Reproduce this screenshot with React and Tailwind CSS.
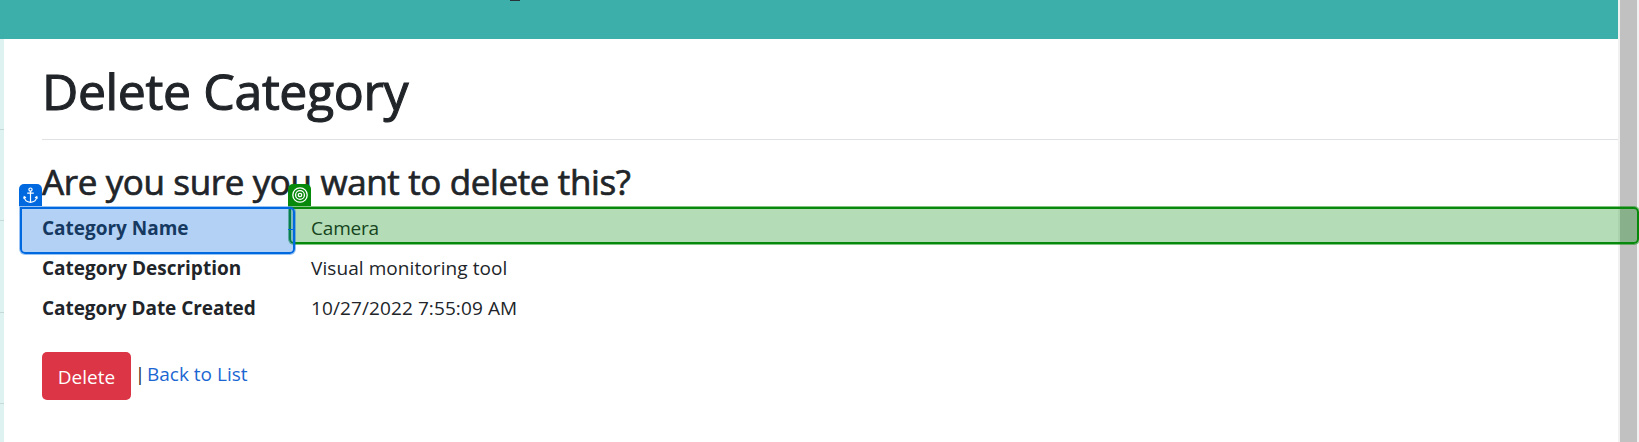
const rows = [
  { label: 'Category Name', value: 'Camera', ls: 'tracking-[-0.02px]', vs: 'tracking-[-0.2px]' },
  { label: 'Category Description', value: 'Visual monitoring tool', ls: 'tracking-[0px]', vs: 'tracking-[0.08px]' },
  { label: 'Category Date Created', value: '10/27/2022 7:55:09 AM', ls: 'tracking-[-0.05px]', vs: 'tracking-[0.1px]' },
];

function AnchorIcon() {
  return (
    <svg className="h-[17px] w-[15px]" viewBox="0 0 15 17" fill="none" stroke="white" strokeWidth="1.2">
      <circle cx="7.5" cy="2.6" r="1.6" />
      <path d="M7.5 4.2V15.4M4.2 6.2H10.8M1.2 9.8C1.6 13.2 4 15.2 7.5 15.3C11 15.2 13.4 13.2 13.8 9.8M.6 11.6L1.2 9.6L3 10.8M14.4 11.6L13.8 9.6L12 10.8" />
    </svg>
  );
}

function TargetIcon() {
  return (
    <svg className="h-4 w-4" viewBox="0 0 16 16" fill="none" stroke="white" strokeWidth="1.3">
      <circle cx="8" cy="8" r="7.2" />
      <circle cx="8" cy="8" r="4.4" />
      <circle cx="8" cy="8" r="1.7" />
    </svg>
  );
}

export default function App() {
  return (
    <div className="relative flex h-[442px] w-full overflow-hidden bg-white font-['Open_Sans','Noto_Sans',sans-serif] text-[#212529]">
      <div className="flex min-w-0 flex-1 flex-col">
        <header className="relative h-[39px] shrink-0 bg-[#3cafaa]">
          <div className="absolute left-[510px] top-0 h-px w-[10px] bg-[#26343a]" />
        </header>
        <div className="flex flex-1">
          <aside className="flex w-1 shrink-0 flex-col bg-[#def2f1]">
            <div className="h-[91px] border-b border-[#c3dad8]" />
            <div className="h-[91px] border-b border-[#c3dad8]" />
            <div className="h-[92px] border-b border-[#c3dad8]" />
            <div className="h-[91px] border-b border-[#c3dad8]" />
          </aside>
          <main className="flex-1 pl-[38px]">
            <h1 className="h-[100px] whitespace-nowrap pt-[20px] text-[50px] font-medium leading-[64px] tracking-[-0.37px] [-webkit-text-stroke:1.1px_#212529]">Delete Category</h1>
            <hr className="border-t border-[#e0e1e2]" />
            <h3 className="mt-[20px] h-[46px] whitespace-nowrap text-[35px] font-medium leading-[44px] tracking-[-0.37px] [-webkit-text-stroke:0.7px_#212529]">Are you sure you want to delete this?</h3>
            <dl className="mt-[2px]">
              {rows.map((r) => (
                <div key={r.label} className="flex h-10 items-center whitespace-nowrap text-[19px] leading-[30px]">
                  <dt className={`w-[269px] font-bold ${r.ls}`}>{r.label}</dt>
                  <dd className={r.vs}>{r.value}</dd>
                </div>
              ))}
            </dl>
            <div className="mt-[24px] flex h-12 whitespace-nowrap text-[19px]">
              <button className="h-12 w-[89px] rounded-[5px] bg-[#dc3545] pt-[2px] text-white">Delete</button>
              <span className="ml-[2px] w-[14px] text-center leading-[44px]">|</span>
              <a className="leading-[45px] text-[#1b66d2]">Back to List</a>
            </div>
          </main>
        </div>
      </div>
      <div className="flex w-[21px] shrink-0 bg-[#f1f1f1] pl-[2px] pr-[2px]">
        <div className="flex-1 bg-[#c1c1c1]" />
      </div>

      <div className="absolute left-[288px] top-[184px] flex h-[22px] w-[23px] justify-center rounded-t-[5px] bg-[#078a0c] pt-[3px]">
        <TargetIcon />
      </div>
      <div className="absolute left-[289px] top-[207px] h-[37px] w-[1350px] rounded-b-[5px] rounded-tr-[5px] border-2 border-[#078a0c] bg-[#078a0c]/30 shadow-[0_0_0_1px_rgba(7,138,12,0.5)]" />
      <div className="absolute left-[19px] top-[184px] flex h-[22px] w-[23px] justify-center rounded-t-[5px] bg-[#0069e0] pt-[3px]">
        <AnchorIcon />
      </div>
      <div className="absolute left-[20px] top-[207px] h-[47px] w-[275px] rounded-b-[5px] rounded-tr-[5px] border-2 border-[#0069e0] bg-[#0069e0]/30 shadow-[0_0_0_1px_rgba(0,105,224,0.4)]" />
      <div className="absolute left-[288px] top-[229px] h-px w-[6px] bg-[#0069e0]" />
    </div>
  );
}
